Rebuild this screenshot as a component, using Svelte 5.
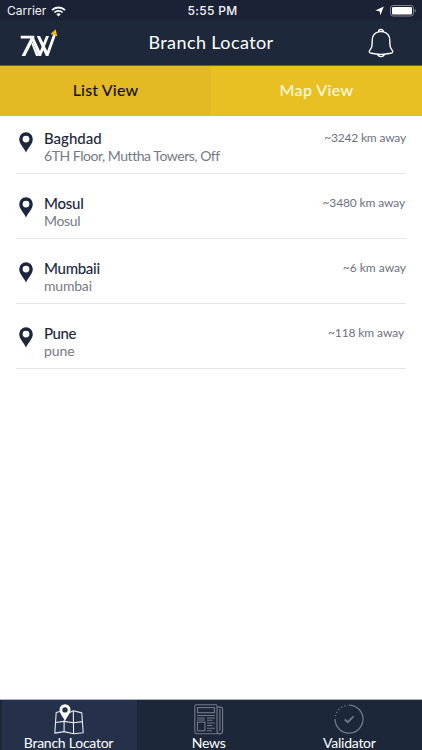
<script>
  const branches = [
    { name: 'Baghdad', address: '6TH Floor, Muttha Towers, Off', distance: '~3242 km away', inset: 0, nameGap: 0, gap: -0.46, awayGap: -0.18 },
    { name: 'Mosul', address: 'Mosul', distance: '~3480 km away', inset: 1, nameGap: -0.25, gap: -0.35, awayGap: -0.13 },
    { name: 'Mumbaii', address: 'mumbai', distance: '~6 km away', inset: 0, nameGap: -0.3, gap: -0.2, awayGap: 0 },
    { name: 'Pune', address: 'pune', distance: '~118 km away', inset: 2, nameGap: -0.4, gap: -0.05, awayGap: -0.1 }
  ];
</script>

<div class="app">
  <div class="status">
    <div class="carrier">
      <span>Carrier</span>
      <svg width="15" height="11" viewBox="0 0 15 11">
        <path d="M1 4.1a9.3 9.3 0 0 1 13 0" fill="none" stroke="#fff" stroke-width="1.9" />
        <path d="M3.4 6.5a5.9 5.9 0 0 1 8.2 0" fill="none" stroke="#fff" stroke-width="1.7" />
        <path d="M5.3 8.3a3.2 3.2 0 0 1 4.4 0L7.5 10.6z" fill="#fff" />
      </svg>
    </div>
    <span class="time">5:55 PM</span>
    <div class="power">
      <svg width="9" height="10" viewBox="0 0 9 10"><path d="M8.8 0.4 L5.4 9.2 L4.5 5.2 L0.3 4.6z" fill="#fff" /></svg>
      <svg width="26" height="12" viewBox="0 0 26 12">
        <rect x="0.5" y="0.5" width="23" height="10.5" rx="2.6" fill="none" stroke="#7b8190" />
        <rect x="2" y="2" width="20" height="7.5" rx="1.2" fill="#fff" />
        <path d="M24.6 4v3.6q1.4-.5 1.4-1.8T24.6 4z" fill="#7b8190" />
      </svg>
    </div>
  </div>

  <header>
    <svg class="logo" width="38" height="29" viewBox="0 0 38 29">
      <g fill="#fff">
        <path d="M.7 6.8H14.3V9.2L5.2 27H1.6L10.5 9.5H.7z" />
        <path d="M12.2 12.2L14 9L20 22L26 7H29L21 27H18.6z" />
        <path d="M16.8 7H20L27.2 22L33.2 5.2L35.8 6.2L28.4 27H25.9z" />
        <path d="M11.4 14.8L12.6 13.6L18.6 27H16z" />
      </g>
      <path d="M30.6 5L35.6 0.3L37.3 7.2z" fill="#e9bf27" />
    </svg>
    <h1>Branch Locator</h1>
    <svg class="bell" width="26" height="31" viewBox="0 0 26 31">
      <g fill="none" stroke="#fff" stroke-width="1.4" stroke-linejoin="round">
        <path d="M10.5 3.9a2.5 2.5 0 1 1 5 0C19.8 5 21.8 8.2 21.8 12.5C21.8 18.4 22.1 19.7 24.1 22.1C25.4 23.7 24.5 25.3 22.7 25.3Q13 27.5 3.3 25.3C1.5 25.3.6 23.7 1.9 22.1C3.9 19.7 4.2 18.4 4.2 12.5C4.2 8.2 6.2 5 10.5 3.9Q13 3.1 15.5 3.9" />
        <path d="M9.6 26.3a3.5 3 0 0 0 6.8 0" />
      </g>
    </svg>
  </header>

  <div class="tabs">
    <button class="active"><span>List View</span></button>
    <button><span>Map View</span></button>
  </div>

  <main>
    {#each branches as b}
      <div class="row">
        <svg class="pin" width="14" height="21" viewBox="0 0 14 21">
          <path fill-rule="evenodd" d="M7 .3A6.7 6.7 0 0 0 .2 7C.2 11.8 4.5 15.3 7 20.4C9.5 15.3 13.8 11.8 13.8 7A6.7 6.7 0 0 0 7 .3zM7 3.7a3.4 3.4 0 1 1 0 6.8a3.4 3.4 0 0 1 0-6.8z" fill="#1c273c" />
        </svg>
        <div class="info">
          <span class="name" style="letter-spacing: {b.nameGap}px">{b.name}</span>
          <span class="address" style="letter-spacing: {b.gap}px">{b.address}</span>
        </div>
        <span class="distance" style="margin-right: {b.inset}px; letter-spacing: {b.awayGap}px">{b.distance}</span>
      </div>
    {/each}
  </main>

  <nav>
    <div class="item selected">
      <svg width="30" height="31" viewBox="0 0 30 31">
        <path d="M7 7.2L2.2 8.5L.8 29.1L10.2 27.6L19.6 29.7L29.2 28.8L27.8 8.9L19.3 6.7L14.5 9M1.5 18.5L10.1 17.4L19.5 18.7L28.5 17.6M10.1 16V27.6M19.3 6.7L19.6 29.7" fill="none" stroke="#e8ebf1" stroke-width="1.1" stroke-linejoin="round" />
        <path d="M11 .3A5.4 5.4 0 0 0 5.5 5.7C5.5 9.4 9 12.5 11 17.2C13 12.5 16.5 9.4 16.5 5.7A5.4 5.4 0 0 0 11 .3z" fill="#fff" />
        <circle cx="11" cy="5.9" r="2.7" fill="#25304a" />
      </svg>
      <span>Branch Locator</span>
    </div>
    <div class="item">
      <svg width="30" height="31" viewBox="0 0 30 31">
        <g fill="none" stroke="#737a87" stroke-width="1.1">
          <path d="M23 27.5V2.2Q23 .8 21.6 .8H2.3Q.8 .8 .8 2.3V27.5Q.8 29.7 3 29.7H26.4" />
          <path d="M23 3.1H26.5Q28.6 3.1 28.6 5.2V27.2A2.8 2.5 0 0 1 23 27.2M25.9 5V27" />
          <rect x="3.5" y="3.6" width="17" height="5.1" />
          <rect x="3.5" y="18.1" width="7.4" height="8.7" />
          <path d="M3 11.5H20.8M3 14H10.8M3 16H10.8M13 14H20.8M13 16.2H18.5M13 19H20.8M13 21.5H18.5M13 24.2H20.8M13 26.7H18" />
        </g>
      </svg>
      <span>News</span>
    </div>
    <div class="item">
      <svg width="30" height="31" viewBox="0 0 30 31">
        <g fill="none" stroke="#737a87" stroke-width="1.3">
          <path d="M15 1.1A14 14 0 1 1 1 15.1" />
          <path d="M1.4 12.2A14 14 0 0 1 14 1.1" stroke-dasharray="1.3 2.2" />
          <path d="M10.7 15.3L13.7 18.2L19.5 12.4" stroke-width="1.7" />
        </g>
      </svg>
      <span>Validator</span>
    </div>
  </nav>
</div>

<style>
  .app {
    width: 422px;
    height: 750px;
    display: flex;
    flex-direction: column;
    overflow: hidden;
    background: #fff;
    font-family: Lato, "Liberation Sans", sans-serif;
    color: #1c273c;
  }
  svg { display: block; flex: none; }
  .status {
    height: 20px;
    flex: none;
    box-sizing: border-box;
    padding: 1px 6px 0 7px;
    display: grid;
    grid-template-columns: 1fr auto 1fr;
    align-items: center;
    background: #1b2235;
    color: #f3f4f7;
    font: 12px/20px Inter, sans-serif;
  }
  .carrier, .power { display: flex; align-items: center; gap: 6px; }
  .carrier { gap: 5px; }
  .power { justify-content: flex-end; }
  .time { font-weight: 500; letter-spacing: 0.35px; padding-left: 2px; }
  header {
    height: 46px;
    flex: none;
    box-sizing: border-box;
    padding: 0 28px 0 20px;
    border-bottom: 1px solid #6b6135;
    display: grid;
    grid-template-columns: 1fr auto 1fr;
    background: #1d283a;
    color: #fff;
  }
  .logo { margin-top: 9px; }
  .bell { margin-top: 8px; justify-self: end; }
  h1 {
    margin: 0 -4px 0 4px;
    font: 400 18px/44px Lato, sans-serif;
    letter-spacing: 0.4px;
  }
  .tabs { height: 50px; flex: none; display: flex; }
  button {
    flex: 1;
    border: 0;
    padding: 0 0 2px;
    background: #e9c024;
    color: #fff9df;
    font: 500 16px/46px Lato, sans-serif;
    letter-spacing: 0.4px;
  }
  .active { background: #e3b924; color: #15130e; letter-spacing: 0.15px; }
  main { flex: 1; padding: 0 16px; }
  .row {
    height: 65.1px;
    box-sizing: border-box;
    display: flex;
    align-items: flex-start;
    padding: 20.3px 0 0 3px;
    border-bottom: 1px solid #e4e5e7;
  }
  .row:first-child { height: 57.5px; padding-top: 12.6px; }
  .pin { margin-top: 3px; }
  .info { margin-left: 11px; display: flex; flex-direction: column; }
  .name { font-size: 15px; line-height: 18px; font-weight: 500; }
  .address { font-size: 14px; line-height: 18px; color: #747984; }
  .distance { margin-left: auto; font-size: 12px; line-height: 18px; color: #6c717e; }
  nav {
    height: 51px;
    flex: none;
    box-sizing: border-box;
    border-top: 1px solid #acb1ba;
    display: grid;
    grid-template-columns: 137px 143.4px 138px;
    background: #1c273a;
    color: #fff;
  }
  .item {
    display: flex;
    flex-direction: column;
    align-items: center;
    padding-top: 4px;
    font-size: 14px;
    line-height: 16px;
    letter-spacing: -0.25px;
  }
  .selected {
    background: linear-gradient(90deg, #1c273a 2px, #25304a 2px);
  }
</style>
